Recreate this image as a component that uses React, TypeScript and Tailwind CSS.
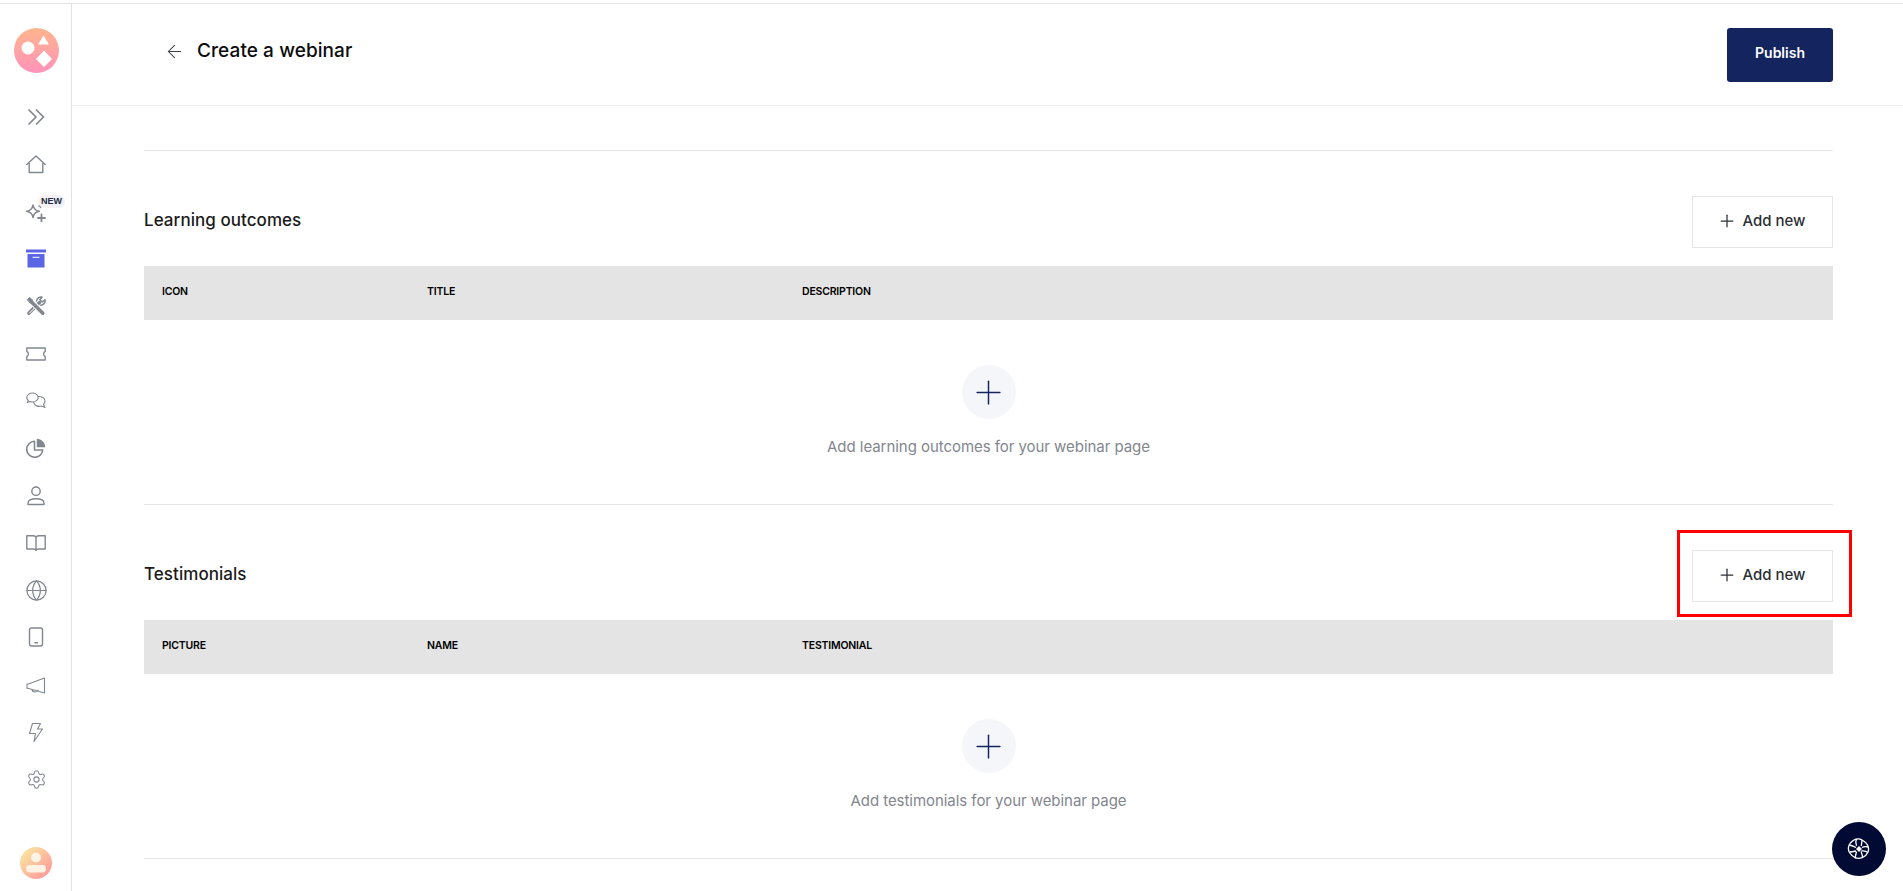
import React from "react";
import { ArrowLeft, Globe, Plus, Settings } from "lucide-react";

const ic = { width: 20, height: 20, viewBox: "0 0 20 20", fill: "none", stroke: "#82878f", strokeWidth: 1.3, strokeLinecap: "round" as const, strokeLinejoin: "round" as const };

const Icons: Record<string, React.ReactNode> = {
  chevrons: <svg {...ic} strokeWidth={1.7}><path d="M3 3 10 10 3 17M10.500 3l7 7-7 7" /></svg>,
  home: <svg {...ic} strokeWidth={1.4}><path d="M.8 10.500 10 2l9.200 8.500M3.200 9v9.500h13.600V9" /></svg>,
  ai: <svg {...ic} strokeWidth={1.5}><path d="M7 3c.6 3.800 2.400 5.600 6.300 6.300C9.400 10 7.600 11.800 7 15.600 6.400 11.800 4.600 10 .7 9.300 4.600 8.600 6.400 6.800 7 3Z" /><path d="M15.500 12.500v7M12 16h7" strokeWidth={1.800} /><path d="M14.500 2.500v3M13 4h3" /></svg>,
  archive: <svg width="20" height="20" viewBox="0 0 20 20"><rect x="0" y="0.500" width="20" height="3" fill="#5a66e3" /><rect x="1.500" y="5" width="17" height="13.500" fill="#5a66e3" /><rect x="6.500" y="7.800" width="7" height="1" fill="#fff" /></svg>,
  tools: <svg width="20" height="20" viewBox="0 0 20 20" fill="none" strokeLinecap="round" strokeLinejoin="round"><path d="M2.800 17.200 13.500 6.500" stroke="#82878f" strokeWidth="3.400" /><path d="M3.500 17 11.500 9" stroke="#fff" strokeWidth="1" /><path d="M3 3.500 17 17" stroke="#fff" strokeWidth="5.500" /><path d="M6 6.500 16.800 17.200" stroke="#82878f" strokeWidth="3.600" /><path d="M1.500 3.500 3.500 1.500l3.500 3-2.500 2.500Z" fill="#82878f" stroke="#82878f" /><path d="M10.500 5c.2-2.500 2.800-4.500 5.500-4l-2.200 2.700 2.300 2.300 2.900-2.200c.5 2.700-1.500 5.400-4.300 5.400" stroke="#82878f" strokeWidth="1.500" /></svg>,
  ticket: <svg {...ic} strokeWidth={1.4}><path d="M.8 4h18.400v3.500c-2.100.5-2.100 4.500 0 5V16H.8v-3.500c2.100-.5 2.100-4.500 0-5Z" /></svg>,
  chat: <svg {...ic} strokeWidth={1.100}><path d="M.8 6.500C.8 4 3.300 2 6.500 2s5.700 2 5.700 4.500S9.700 11 6.500 11c-1 0-2-.2-2.700-.5L1.300 11.500 2.300 9.500C1.300 8.700.8 7.700.8 6.500Z" /><path d="M12 5.500c3.600 0 7 1.500 7 4.800 0 1.300-.6 2.300-1.500 3l1.500 3.200-3.500-1.500c-3 1-6.900-.1-7.900-3.700" /></svg>,
  pie: <svg {...ic} strokeWidth={1.600}><path d="M8.500 3.300a8 8 0 1 0 8.200 8.700H8.500Z" /><path d="M10.800.8c4.600 0 8.400 3.700 8.400 8.400h-8.400Z" fill="#82878f" stroke="none" /></svg>,
  user: <svg {...ic} strokeWidth={1.400}><circle cx="10" cy="5.200" r="4.200" /><path d="M2 18.500v-1.500c0-2.500 3-4.300 8-4.300s8 1.800 8 4.300v1.500Z" /></svg>,
  book: <svg {...ic} strokeWidth={1.400}><path d="M.8 2.800h6.200c1.500 0 3 .8 3 2v12.700c0-1-1.500-1.500-3-1.500H.8ZM19.200 2.800H13c-1.500 0-3 .8-3 2v12.700c0-1 1.500-1.500 3-1.500h6.200Z" /></svg>,
  phone: <svg {...ic} strokeWidth={1.400}><rect x="3.500" y="1" width="13" height="18" rx="2" /><path d="M9 15.800h2.500" /></svg>,
  mega: <svg {...ic} strokeWidth={1.100}><path d="M1 9.500 18.500 3v15L1 13ZM1 9v4.500M6 14.500c0 3 5.500 3.500 6 .5" /></svg>,
  zap: <svg {...ic} strokeWidth={1.100}><path d="M6.500 1.500h8l-3 5.500h5L8 19.500l1.500-8h-6Z" /></svg>,
};

const sidebarIcons: React.ReactNode[] = [
  Icons.chevrons, Icons.home,
  <div className="relative flex" key="ai">
    {Icons.ai}
    <span className="absolute left-[12px] top-[-7px] rounded-full bg-gradient-to-r from-[#f8f1ee] to-[#edf0fb] px-[3px] font-['Liberation_Sans',sans-serif] text-[9px] leading-[13px] font-bold text-[#222b45]">NEW</span>
  </div>,
  Icons.archive, Icons.tools, Icons.ticket, Icons.chat, Icons.pie, Icons.user, Icons.book,
  <Globe key="g" size={23} color="#82878f" strokeWidth={1.300} />,
  Icons.phone, Icons.mega, Icons.zap,
  <Settings key="s" size={21} color="#82878f" strokeWidth={1.200} />,
];

function Logo() {
  return (
    <svg width="45" height="45" viewBox="0 0 45 45">
      <defs>
        <linearGradient id="lg" x1="0.500" y1="0" x2="0.500" y2="1">
          <stop offset="0" stopColor="#ffb58c" />
          <stop offset="1" stopColor="#ff93bb" />
        </linearGradient>
      </defs>
      <circle cx="22.500" cy="22.500" r="22.500" fill="url(#lg)" />
      <circle cx="14" cy="20" r="6.500" fill="#fff" />
      <path d="M29.500 7.500 35 16.500H24Z" fill="#fff" />
      <path d="M30 22.500 38 31l-8 8-8-8Z" fill="#fff" />
    </svg>
  );
}

function Avatar() {
  return (
    <svg width="32" height="32" viewBox="0 0 32 32">
      <defs>
        <linearGradient id="av" x1="0" y1="0" x2="1" y2="1">
          <stop offset="0" stopColor="#f9efa0" />
          <stop offset="1" stopColor="#ff8f9a" />
        </linearGradient>
      </defs>
      <circle cx="16" cy="16" r="16" fill="url(#av)" />
      <circle cx="16" cy="10.500" r="5" fill="#fff3e3" />
      <rect x="6" y="18" width="20" height="7.500" rx="3.700" fill="#fff3e3" />
    </svg>
  );
}

function Section({ title, cols, hint, annotate }: { title: string; cols: string[]; hint: string; annotate?: boolean }) {
  return (
    <section className="flex h-[354px] flex-col border-b border-[#e5e5e5]">
      <div className="mt-[45px] flex items-center justify-between">
        <h2 className="mt-[-3px] text-[17px] font-medium tracking-[0.05px] text-[#1a1a1a]">{title}</h2>
        <div className="relative">
          <button className="flex h-[52px] w-[141px] items-center justify-center gap-[5px] border border-[#e5e5e5] bg-white pr-[2px] pb-[2px] text-[15px] font-medium text-[#2b2f36]">
            <Plus size={20} strokeWidth={1.500} color="#2b2f36" />
            Add new
          </button>
          {annotate && <div className="absolute left-[-15px] top-[-20px] h-[87px] w-[175px] border-[3px] border-[#ff0000]" />}
        </div>
      </div>
      <div className="mt-[18px] flex h-[54px] items-center bg-[#e4e4e4] pb-[2px] pl-[18px] text-[10.500px] font-semibold tracking-[-0.2px] text-black">
        <span className="w-[265px]">{cols[0]}</span>
        <span className="w-[375px]">{cols[1]}</span>
        <span>{cols[2]}</span>
      </div>
      <div className="mt-[45px] flex flex-col items-center">
        <div className="flex h-[54px] w-[54px] items-center justify-center rounded-full bg-[#f5f6fa]">
          <Plus size={39} strokeWidth={0.900} color="#14245f" />
        </div>
        <p className="mt-[18px] text-[15px] leading-[20px] tracking-[-0.05px] text-[#83868e]">{hint}</p>
      </div>
    </section>
  );
}

export default function App() {
  return (
    <div className="relative flex h-screen flex-col overflow-hidden bg-white font-['Inter',sans-serif]">
      <div className="mt-[3px] h-px shrink-0 bg-[#e5e5e5]" />
      <div className="flex min-h-0 flex-1">
        <aside className="flex w-[72px] shrink-0 flex-col items-center border-r border-[#e2e2e2] pt-[24px] pl-[1px]">
          <Logo />
          <nav className="mt-[20.500px] flex flex-col items-center">
            {sidebarIcons.map((node, i) => (
              <div key={i} className="flex h-[47.300px] w-[24px] items-center justify-center">{node}</div>
            ))}
          </nav>
          <div className="mt-auto mb-[12px] flex">
            <Avatar />
          </div>
        </aside>
        <main className="flex min-w-0 flex-1 flex-col">
          <header className="flex h-[102px] shrink-0 items-center justify-between border-b border-[#eeeeee] pr-[70px] pl-[92px]">
            <div className="mt-[-7px] flex items-center gap-[12px]">
              <ArrowLeft size={21} strokeWidth={1.200} color="#3d4249" />
              <h1 className="text-[19px] font-medium tracking-[0.08px] text-[#0c0c0c]">Create a webinar</h1>
            </div>
            <button className="h-[54px] w-[106px] rounded-[3px] bg-[#14245f] pb-[4px] text-[14px] font-semibold text-white">Publish</button>
          </header>
          <div className="mt-[44px] mr-[70px] ml-[72px] flex flex-col border-t border-[#e5e5e5]">
            <Section title="Learning outcomes" cols={["ICON", "TITLE", "DESCRIPTION"]} hint="Add learning outcomes for your webinar page" />
            <Section title="Testimonials" cols={["PICTURE", "NAME", "TESTIMONIAL"]} hint="Add testimonials for your webinar page" annotate />
          </div>
        </main>
      </div>
      <button className="absolute right-[17px] bottom-[15px] flex h-[54px] w-[54px] items-center justify-center rounded-full bg-[#000a33]">
        <svg width="24" height="24" viewBox="0 0 24 24" fill="none" stroke="#fff" strokeWidth="1.300" strokeLinejoin="round">
          <path d="M9 2.200c2-.8 4-.4 6 .8s4 2 5.500 5 1.300 5 .5 7-2 4-5.500 5.500-5.500 1-7.500 0-4-2.500-5.500-5-1.300-5-.5-7S5 3.700 9 2.200Z" />
          <path d="M9.500 2C8.500 4 8.500 6.500 9.500 8.800M15 3c0 2.500-.5 4.500-.8 6M21 10c-2-.5-4-.5-6 .5M21 15.500c-2-1.500-4-2-6.500-1.500M15.500 21c0-2.500-.5-4.500-1.500-6.500M8 21.500c.5-2.500 1-5 1.500-7M2.500 15c2.500 0 4.500-.5 6.500-1M2.500 8c2 .5 4.500 1.500 6.500 2.500" />
          <path d="M12 9 15 12 12 15 9 12Z" fill="#fff" stroke="none" />
        </svg>
      </button>
    </div>
  );
}
